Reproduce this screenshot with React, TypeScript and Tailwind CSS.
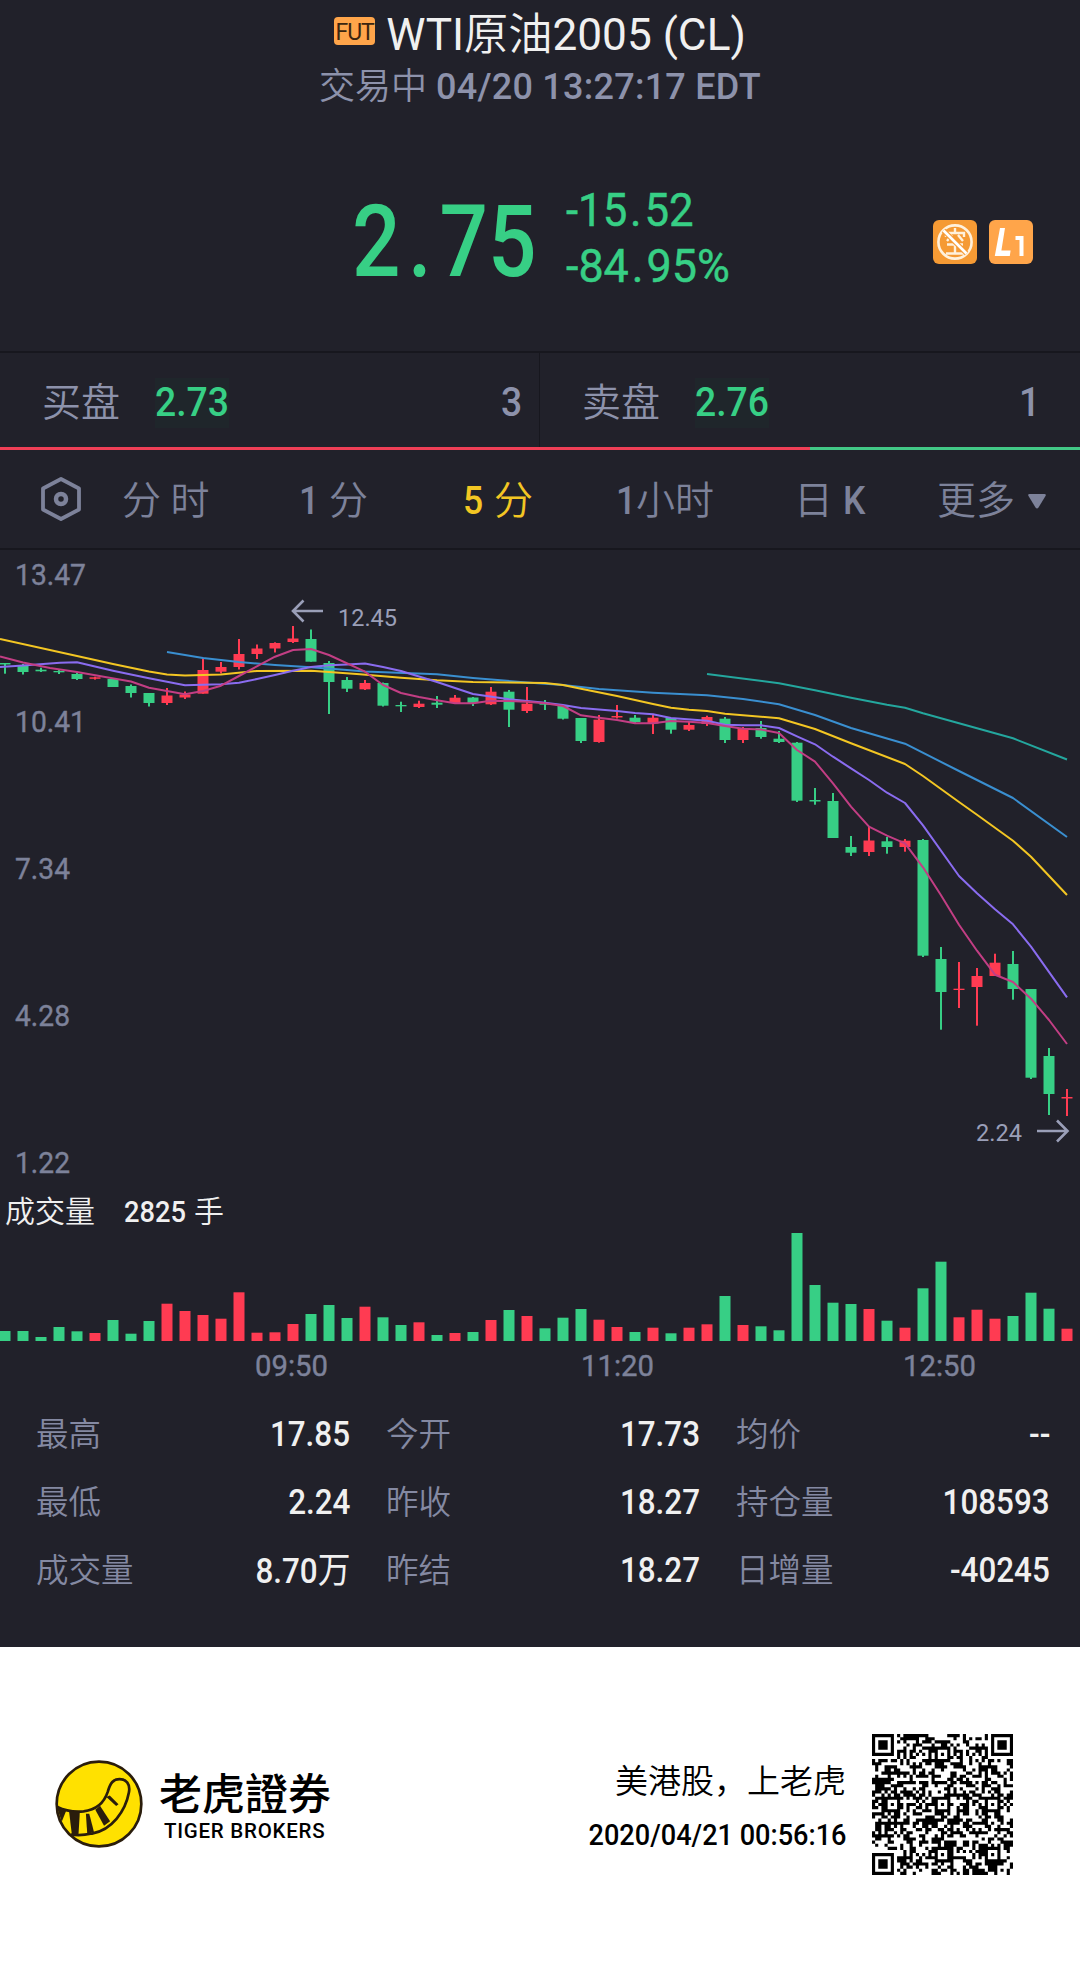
import clsx from "clsx";
import type { ReactNode } from "react";

const UP = "#ff3b52";
const DOWN = "#37cf85";

// [direction, high, body top, body bottom, low]
type Candle = ["u" | "d", number, number, number, number];

const candles: Candle[] = [
  ["d", 663, 663, 664.5, 673.7],
  ["d", 664, 665.3, 672, 674.5],
  ["d", 667.7, 669.7, 671.3, 672],
  ["d", 669.3, 671, 672.3, 674],
  ["d", 672.7, 674, 679, 680],
  ["u", 676.7, 677.3, 678.8, 679.6],
  ["d", 679, 679, 687, 687],
  ["d", 684.5, 686, 693, 697.5],
  ["d", 693, 693, 703, 706.5],
  ["u", 688, 695.5, 703, 705],
  ["u", 691.5, 694.5, 697.5, 699],
  ["u", 657.7, 670, 693.7, 693.7],
  ["u", 662, 667, 671.7, 673.5],
  ["u", 639, 654, 667, 669.5],
  ["u", 644.5, 648.5, 654, 659],
  ["u", 642.3, 643, 648.5, 652.5],
  ["u", 626, 638.5, 642, 643],
  ["d", 629.5, 639, 661.7, 661.7],
  ["d", 661, 663, 682, 714],
  ["d", 677, 680, 688.7, 692],
  ["u", 680, 683, 689.3, 690],
  ["d", 682.5, 683, 705.7, 706.5],
  ["d", 701.7, 705, 706.3, 712],
  ["u", 700.7, 703.7, 707, 708],
  ["d", 696, 702.7, 704.7, 708],
  ["u", 695, 697.7, 703, 704],
  ["d", 697, 697.5, 703, 706],
  ["u", 687, 691.7, 704.3, 705],
  ["d", 690, 691.7, 709.7, 727],
  ["u", 687, 703.7, 711, 713],
  ["d", 700, 703.3, 704.7, 710],
  ["d", 706, 706, 718.7, 719.5],
  ["d", 718, 718, 741, 743],
  ["u", 715, 719.7, 742, 742.7],
  ["u", 705, 716, 717.5, 718.5],
  ["d", 715, 717.7, 722, 723],
  ["u", 714, 717.7, 723.5, 734],
  ["d", 718, 718, 729.7, 733.7],
  ["u", 722, 725, 729.7, 731],
  ["u", 715.7, 717, 724, 726],
  ["d", 717, 718.7, 740, 743],
  ["u", 727, 728.5, 740, 743],
  ["d", 721, 728, 737, 738.7],
  ["d", 731, 738.7, 742, 743],
  ["d", 742, 742.7, 800.7, 802],
  ["d", 788, 800, 801.5, 804.7],
  ["d", 793, 801, 838, 838],
  ["d", 836, 847, 852.7, 856],
  ["u", 827, 840.5, 852, 856],
  ["d", 837, 841.3, 847, 853.7],
  ["u", 839, 840.7, 847, 851.7],
  ["d", 839, 840, 955.7, 957],
  ["d", 947, 959, 992, 1029.7],
  ["u", 962, 988.7, 990, 1008],
  ["u", 968, 976, 987, 1025.7],
  ["u", 953.7, 962.7, 976, 976],
  ["d", 951, 964, 989, 999.7],
  ["d", 989, 989, 1077.7, 1079],
  ["d", 1048, 1056, 1094, 1115],
  ["u", 1089, 1097, 1098.5, 1116],
];

const volumes = [
  10, 10, 4, 14, 9.7, 8, 21, 7.3, 20, 37.3, 30, 26, 22.3, 48.7, 8.3, 8.7, 17,
  27, 36, 23, 34.3, 23.7, 16, 18.7, 6, 8, 9, 21, 31, 25, 12.7, 23.3, 32, 21.3,
  14, 9, 13.3, 7.7, 13.3, 16.7, 45, 16, 14.7, 10.7, 108, 56, 38.3, 37, 32,
  20.3, 13.3, 52.7, 79.3, 23.7, 31.3, 22.3, 25, 48.3, 32.3, 12.3,
];

const averages = [
  {
    color: "#24a79e",
    points:
      "707,674 779,683.3 815,690.3 851,697.7 887,704.7 905,707.7 923,713.3 1013,738.3 1067,759.5",
  },
  {
    color: "#3a8fd0",
    points:
      "167,652 203,658 239,662 275,665 311,667.3 347,670 365,671.5 437,674.3 473,678 527,682.5 563,685 599,689 653,692.7 707,695.3 743,699 779,704.3 815,715 851,728 905,743.7 959,771 1013,798 1067,837",
  },
  {
    color: "#f3c623",
    points:
      "0,639 77,656 113,664 149,671.5 167,674.5 185,675.5 221,674.5 257,671 311,670.7 329,672 360,674.3 401,677.7 437,680.3 473,682 545,683 563,685 581,688.7 617,696 635,700 653,704 671,707.7 689,709.7 707,711 725,713.7 779,718.3 815,729 851,743.3 905,764 923,776 959,802 977,814.7 1013,840.7 1031,856.7 1067,895",
  },
  {
    color: "#8a6cf0",
    points:
      "0,667 23,665.5 60,662.7 77,662.3 113,670.7 149,678.3 185,685.3 221,684.3 239,682.7 257,679 275,675 293,670.7 311,667 329,665.3 347,664.5 365,663.5 383,667 401,671 437,682 473,694 509,699.3 545,702.7 563,705 581,708 617,711 635,713 653,714.3 671,718 707,720.7 725,724.7 743,725.3 761,725.3 779,728 797,736.3 815,744.3 833,756.7 851,768.3 869,780 887,792.7 905,803 923,825.3 959,876 977,893.3 995,909.3 1013,924.3 1031,946.7 1067,997.3",
  },
  {
    color: "#c23e84",
    points:
      "0,656.5 23,662.5 50,668 77,672 108,677.5 131,681.5 149,687.7 185,694.3 203,691 221,685.7 239,676 275,656.7 293,650 311,649 329,655 365,671.7 383,685 401,693 419,697 437,700.3 455,703.3 473,703.3 491,700.7 509,701 527,701.7 545,703.3 563,706 581,715.3 599,717.7 617,720 635,723.3 653,723.3 671,721 689,721.7 707,723 725,726 743,728.7 761,729.5 779,733 797,750 815,761.7 833,783.3 851,806.7 869,826.7 887,835.7 905,843.3 923,867.3 941,895.3 959,924.7 977,950.7 995,974.7 1013,982 1031,998.7 1049,1020 1067,1044",
  },
];

const priceLabels = [
  { text: "13.47", y: 585, width: 69 },
  { text: "10.41", y: 732, width: 69 },
  { text: "7.34", y: 879, width: 53 },
  { text: "4.28", y: 1026, width: 53 },
  { text: "1.22", y: 1173, width: 53 },
];

const timeLabels = [
  { text: "09:50", x: 255 },
  { text: "11:20", x: 581 },
  { text: "12:50", x: 903 },
];

const stats = [
  ["最高", "17.85"],
  ["今开", "17.73"],
  ["均价", "--"],
  ["最低", "2.24"],
  ["昨收", "18.27"],
  ["持仓量", "108593"],
  ["成交量", "8.70万"],
  ["昨结", "18.27"],
  ["日增量", "-40245"],
];

const candleX = (i: number) => 5 + i * 18;

// Narrow figures used for every quote on the page
function Num({ children, className }: { children: ReactNode; className?: string }) {
  return (
    <span
      className={clsx(
        "inline-block whitespace-nowrap scale-x-[0.91] font-medium",
        className
      )}
    >
      {children}
    </span>
  );
}

function Header() {
  return (
    <header className="flex h-[120px] flex-col items-center">
      <div className="flex h-[67px] items-end">
        <span className="mr-[11px] mb-[22px] flex h-7 w-[41px] items-center justify-center rounded-[4px] bg-[#ffa54a] pt-0.5 text-[23px] leading-none tracking-[-1px] text-[#3a2510]">
          FUT
        </span>
        <h1 className="whitespace-nowrap text-[44.2px] leading-[64px] text-[#f0f0f0]">
          WTI<span className="font-[350]">原油</span>2005 (CL)
        </h1>
      </div>
      <p className="whitespace-nowrap text-[36px] leading-[40px] text-[#8d92ab]">
        <span className="font-[350]">交易中</span>{" "}
        <span className="font-medium tracking-[0.25px]">04/20 13:27:17 EDT</span>
      </p>
    </header>
  );
}

function NoShortIcon() {
  return (
    <svg width="44" height="44" viewBox="0 0 44 44">
      <rect width="44" height="44" rx="6" fill="#f59a34" />
      <g fill="none" stroke="#fff1dc">
        <circle cx="22" cy="22" r="16.6" strokeWidth="2.6" />
        <path
          d="M22 8v4M13 17v-4h18v4M19 15l-5 6M25 15l5 6M14 24.500h16M22 24v9M13 33.500h18"
          strokeWidth="2.4"
        />
        <path d="M10.500 10.500l23 23" stroke="#f59a34" strokeWidth="5" />
        <path d="M10.500 10.500l23 23" stroke="#fff" strokeWidth="2.6" />
      </g>
    </svg>
  );
}

function LevelIcon() {
  return (
    <svg width="44" height="44" viewBox="0 0 44 44">
      <rect width="44" height="44" rx="6" fill="#ffa54a" />
      <path d="M11 8h5l-3.600 22.500h9.200l-.8 5.500H5.800z" fill="#fff" />
      <path d="M26.500 16h8v20h-4V20h-4z" fill="#fff" />
    </svg>
  );
}

function Quote() {
  return (
    <section className="flex h-[231px] items-start pl-[352px] text-[#37cf85]">
      <div className="mt-[61px] flex h-[120px] w-[214px] items-center">
        <span className="flex origin-left scale-x-[0.845] text-[101px] font-medium leading-none">
          2<span className="w-[46px] text-center">.</span>75
        </span>
      </div>
      <div className="mt-[62px] flex w-[367px] flex-col items-start text-[46.5px] leading-[56px]">
        <span className="origin-left scale-x-[0.94] whitespace-nowrap [-webkit-text-stroke:0.5px_#37cf85]">
          -15<span className="px-[3px]">.</span>52
        </span>
        <span className="origin-left scale-x-[0.965] whitespace-nowrap [-webkit-text-stroke:0.5px_#37cf85]">
          -84<span className="px-[3px]">.</span>95%
        </span>
      </div>
      <div className="mt-[100px] flex gap-3">
        <NoShortIcon />
        <LevelIcon />
      </div>
    </section>
  );
}

function BookSide({
  label,
  price,
  size,
  className,
}: {
  label: string;
  price: string;
  size: string;
  className?: string;
}) {
  return (
    <div
      className={clsx(
        "flex items-center pl-[42px] pt-1.5 text-[39px] text-[#8d92ab]",
        className
      )}
    >
      <span className="w-[113px] font-[350]">{label}</span>
      <span className="flex h-[50px] w-[74px] items-center bg-[#1f262b] text-[41px] text-[#37cf85]">
        <Num className="origin-left">{price}</Num>
      </span>
      <Num className="ml-auto origin-right text-[41px]">{size}</Num>
    </div>
  );
}

function OrderBook() {
  return (
    <section className="border-t-2 border-[#17171e]">
      <div className="flex h-[94px]">
        <BookSide className="w-[539px] pr-[17px]" label="买盘" price="2.73" size="3" />
        <div className="w-px bg-[#17171e]" />
        <BookSide className="w-[540px] pr-[40px]" label="卖盘" price="2.76" size="1" />
      </div>
      <div className="flex h-[3px]">
        <div className="w-3/4 bg-[#f03f56]" />
        <div className="w-1/4 bg-[#42c886]" />
      </div>
    </section>
  );
}

function PeriodTabs() {
  return (
    <nav className="flex h-[100px] items-center border-b-2 border-[#17171e] pt-1 text-[39px] font-[350] leading-none text-[#7d829a]">
      <svg className="ml-10 -mt-1" width="42" height="46" viewBox="0 0 42 46" fill="none" stroke="currentColor">
        <path d="M21 3l18 9.500v21L21 43 3 33.500v-21z" strokeWidth="3.800" strokeLinejoin="round" />
        <circle cx="21" cy="23" r="5" strokeWidth="4.500" />
      </svg>
      <span className="ml-[40px] w-[177px] whitespace-pre">分 时</span>
      <span className="flex w-[164px]">
        <Num className="w-[30px] origin-left">1</Num>分
      </span>
      <span className="flex w-[153px] text-[#f3c623]">
        <Num className="w-[31px] origin-left">5</Num>分
      </span>
      <span className="flex w-[178px]">
        <Num className="w-[20px] origin-left">1</Num>小时
      </span>
      <span className="flex w-[143px]">
        日<Num className="ml-[10px] origin-left">K</Num>
      </span>
      <span>更多</span>
      <svg className="ml-[13px]" width="18" height="15" viewBox="0 0 18 15" fill="currentColor">
        <path d="M1.500 0h15q2 0 1 2l-7 11.500q-1.500 2-3 0L.5 2Q-.5 0 1.500 0z" />
      </svg>
    </nav>
  );
}

function PriceChart() {
  return (
    <svg className="block" width="1080" height="640" viewBox="0 550 1080 640">
      {candles.map(([dir, high, top, bottom, low], i) => {
        const color = dir === "u" ? UP : DOWN;
        return (
          <g key={i} fill={color}>
            <rect x={candleX(i) - 1} y={high} width="2" height={low - high} />
            <rect x={candleX(i) - 5.5} y={top} width="11" height={bottom - top} />
          </g>
        );
      })}
      {averages.map((line) => (
        <polyline
          key={line.color}
          points={line.points}
          fill="none"
          stroke={line.color}
          strokeWidth="2"
          strokeLinejoin="round"
        />
      ))}
      <g fill="#7d829a" fontSize="30" stroke="#7d829a" strokeWidth="0.4">
        {priceLabels.map((l) => (
          <text key={l.text} x="15" y={l.y} textLength={l.width + 2} lengthAdjust="spacingAndGlyphs">
            {l.text}
          </text>
        ))}
      </g>
      <g fill="#9a9fb8" fontSize="24">
        <text x="338" y="626" textLength="59" lengthAdjust="spacingAndGlyphs">
          12.45
        </text>
        <text x="976" y="1140.500" textLength="46" lengthAdjust="spacingAndGlyphs">
          2.24
        </text>
      </g>
      <g fill="none" stroke="#9a9fb8" strokeWidth="2.600">
        <path d="M323 611h-30M303.500 600.500L293 611l10.500 10.500" />
        <path d="M1037 1131h30M1057 1120.500l10.500 10.500-10.500 10.500" />
      </g>
    </svg>
  );
}

function VolumeChart() {
  return (
    <section>
      <div className="flex h-[42px] items-center pl-[5px] text-[30px] text-[#f0f0f0]">
        <span className="w-[119px] font-[350]">成交量</span>
        <Num className="w-[70px] origin-left">2825</Num>
        <span className="font-[350]">手</span>
      </div>
      <svg className="block" width="1080" height="163" viewBox="0 1232 1080 163">
        {volumes.map((v, i) => (
          <rect
            key={i}
            x={candleX(i) - 5.5}
            y={1341 - v}
            width="11"
            height={v}
            fill={candles[i][0] === "u" ? UP : DOWN}
          />
        ))}
        <g fill="#7d829a" fontSize="30" stroke="#7d829a" strokeWidth="0.4">
          {timeLabels.map((l) => (
            <text key={l.text} x={l.x} y="1376" textLength="73" lengthAdjust="spacingAndGlyphs">
              {l.text}
            </text>
          ))}
        </g>
      </svg>
    </section>
  );
}

function Stats() {
  return (
    <section className="grid h-[252px] grid-cols-[350px_350px_350px] content-start pt-[6px]">
      {stats.map(([label, value]) => (
        <div key={label + value} className="flex h-[68px] items-center justify-between pl-[36px]">
          <span className="pt-px text-[32.5px] font-[350] text-[#8489a2]">{label}</span>
          <Num className="origin-right text-[34.5px] text-[#f0f0f0]">
            {value.replace("万", "")}
            {value.endsWith("万") && <span className="text-[36px] font-normal">万</span>}
          </Num>
        </div>
      ))}
    </section>
  );
}

function TigerLogo() {
  return (
    <svg width="88" height="88" viewBox="0 0 262 262">
      <circle cx="131" cy="131" r="126" fill="#ffe100" stroke="#2a1d0c" strokeWidth="8" />
      <path
        d="M7 140C35 154 60 155 85 153c40-5 62-28 72-58 8-28 17-38 35-38 20 0 33 14 28 40-10 54-50 112-110 122-25 5-50 5-62 2"
        fill="none"
        stroke="#2a1d0c"
        strokeWidth="8"
      />
      <g fill="#2a1d0c">
        <path d="M5 138l28 14-13 32z" />
        <path d="M42 154l32 0-4 66H50z" />
        <path d="M92 160l10 0 14 54-20 6z" />
        <path d="M120 148l14-12 30 46-18 14z" />
        <path d="M153 110l10-4 26 26-7 5z" />
      </g>
    </svg>
  );
}

const QR_SIZE = 45;

function buildQr() {
  const eye = (x: number, y: number, size: number) => {
    const d = Math.max(Math.abs(x), Math.abs(y));
    return size === 3 ? d !== 2 && d <= 3 : d !== 1;
  };
  const eyes = [
    [3, 3],
    [QR_SIZE - 4, 3],
    [3, QR_SIZE - 4],
  ];
  const aligns = [
    [22, 6],
    [6, 22],
    [22, 22],
    [38, 22],
    [22, 38],
    [38, 38],
  ];
  let seed = 20200421;
  let path = "";
  for (let y = 0; y < QR_SIZE; y++) {
    for (let x = 0; x < QR_SIZE; x++) {
      seed = (seed * 1103515245 + 12345) % 2147483648;
      let on = ((seed >> 12) & 255) < 130;
      if (x === 6 || y === 6) on = (x + y) % 2 === 0;
      for (const [cx, cy] of aligns) {
        if (Math.abs(x - cx) <= 2 && Math.abs(y - cy) <= 2) on = eye(x - cx, y - cy, 2);
      }
      for (const [cx, cy] of eyes) {
        if (Math.abs(x - cx) <= 4 && Math.abs(y - cy) <= 4) on = eye(x - cx, y - cy, 3);
      }
      if (on) path += `M${x} ${y}h1v1h-1z`;
    }
  }
  return path;
}

const qrPath = buildQr();

function Footer() {
  return (
    <footer className="flex h-[316px] items-start bg-white pl-[55px] text-black">
      <div className="mt-[113px]">
        <TigerLogo />
      </div>
      <div className="ml-[16px] mt-[125px] w-[300px]">
        <p className="whitespace-nowrap text-[43px] font-medium leading-[46px]">老虎證券</p>
        <p className="pl-[5px] text-[20.5px] font-medium leading-[26px] tracking-[0.75px]">
          TIGER BROKERS
        </p>
      </div>
      <div className="mt-[113px] flex w-[387px] flex-col items-end">
        <p className="whitespace-nowrap text-[33px] font-[350] leading-[44px]">美港股，上老虎</p>
        <Num className="mt-[10px] origin-right scale-x-[0.9] text-[29.8px] leading-[42px]">
          2020/04/21 00:56:16
        </Num>
      </div>
      <svg className="ml-[26px] mt-[87px]" width="141" height="141" viewBox="0 0 45 45">
        <path d={qrPath} />
      </svg>
    </footer>
  );
}

export default function App() {
  return (
    <main className="w-[1080px] overflow-hidden bg-[#21212a] font-[Roboto,'Noto_Sans_CJK_SC',sans-serif]">
      <Header />
      <Quote />
      <OrderBook />
      <PeriodTabs />
      <PriceChart />
      <VolumeChart />
      <Stats />
      <Footer />
    </main>
  );
}
